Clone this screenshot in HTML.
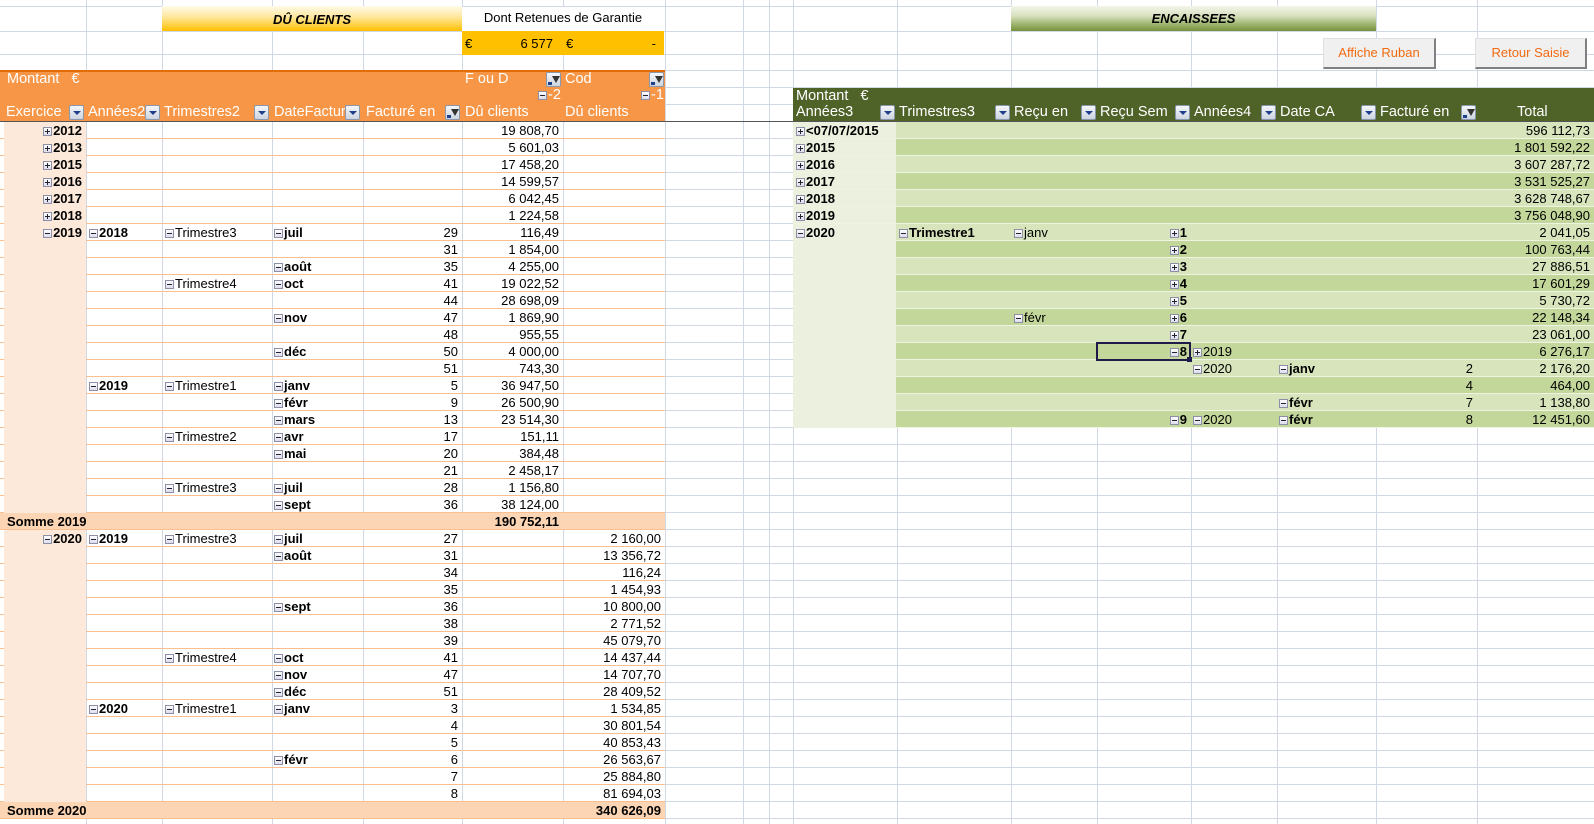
<!DOCTYPE html>
<html><head><meta charset="utf-8"><style>
*{margin:0;padding:0;box-sizing:border-box}
body{width:1594px;height:824px;position:relative;overflow:hidden;background:#fff;font-family:"Liberation Sans",Arial,sans-serif;font-size:13px;color:#000}
.v{position:absolute;top:0;height:824px;width:1px;background:#D0D7E5}
.h{position:absolute;left:0;width:1594px;height:1px;background:#D0D7E5}
.grid{position:absolute;left:0;top:122px;width:1594px;height:702px;background:repeating-linear-gradient(to bottom,transparent 0 16px,#D0D7E5 16px 17px)}
.L{position:absolute;left:0;width:665px;height:17px;border-bottom:1px solid #FABF8F}
.L .b0{position:absolute;left:4px;top:0;width:82px;height:17px;background:#FDE9D9}
.R{position:absolute;left:793px;width:801px;height:17px;border-bottom:1px solid #EEF3E2}
.c{position:absolute;top:0;height:16px;line-height:17px;white-space:nowrap;overflow:hidden}
.rt{text-align:right;padding-right:4px}
.bd{font-weight:bold}
.a0{left:0;width:86px}.a1{left:86px;width:76px;padding-left:3px}.a2{left:162px;width:110px;padding-left:3px}.a3{left:272px;width:91px;padding-left:2px}.a4{left:363px;width:99px}.a5{left:462px;width:101px}.a6{left:563px;width:102px}
.b_0{left:0;width:103px;padding-left:3px}.b_1{left:103px;width:115px;padding-left:3px}.b_2{left:218px;width:86px;padding-left:3px}.b_3{left:304px;width:94px}.b_4{left:398px;width:86px;padding-left:2px}.b_5{left:484px;width:99px;padding-left:2px}.b_6{left:583px;width:101px}.b_7{left:684px;width:117px}
.p,.m{display:inline-block;width:9px;height:9px;border:1px solid #8d8fa6;background:linear-gradient(#fff,#dde);position:relative;margin-right:1px;vertical-align:-1px}
.p::before,.m::before{content:"";position:absolute;left:1px;top:3px;width:5px;height:1px;background:#223}
.p::after{content:"";position:absolute;left:3px;top:1px;width:1px;height:5px;background:#223}
.hd{position:absolute;color:#fff;font-size:14.5px;line-height:17px;white-space:nowrap}
.dd{position:absolute;width:15px;height:15px;border:1px solid #8a98ad;border-radius:2px;background:linear-gradient(#f4f6f9,#cdd5e0)}
.dd::after{content:"";position:absolute;left:3px;top:5px;border-left:4px solid transparent;border-right:4px solid transparent;border-top:4px solid #1e3f8a}
.ff::after{content:"";position:absolute;left:5px;top:3px;width:0;height:0;border-left:4px solid transparent;border-right:4px solid transparent;border-top:7px solid #333}
.ff::before{content:"";position:absolute;left:1px;top:9px;width:4px;height:3px;background:#1e3f8a}
.btn{position:absolute;background:#f0f0f0;border:1px solid #e0e0e0;border-right:2px solid #808080;border-bottom:2px solid #808080;color:#F26A10;font-size:13px;text-align:center;line-height:27px}
</style></head><body>
<div class="grid"></div>
<div class="h" style="top:6px"></div><div class="h" style="top:31px"></div><div class="h" style="top:54px"></div><div class="h" style="top:70px"></div><div class="h" style="top:87px"></div><div class="h" style="top:104px"></div>
<div class="v" style="left:86px"></div><div class="v" style="left:162px"></div><div class="v" style="left:272px"></div><div class="v" style="left:363px"></div><div class="v" style="left:462px"></div><div class="v" style="left:563px"></div><div class="v" style="left:665px"></div><div class="v" style="left:743px"></div><div class="v" style="left:769px"></div><div class="v" style="left:793px"></div><div class="v" style="left:897px"></div><div class="v" style="left:1011px"></div><div class="v" style="left:1097px"></div><div class="v" style="left:1191px"></div><div class="v" style="left:1277px"></div><div class="v" style="left:1376px"></div><div class="v" style="left:1477px"></div>

<div style="position:absolute;left:162px;top:6px;width:300px;height:25px;background:linear-gradient(#fffbea,#ffe699 45%,#ffc000);text-align:center;font-weight:bold;font-style:italic;font-size:13px;line-height:28px">DÛ CLIENTS</div>
<div style="position:absolute;left:462px;top:7px;width:202px;height:24px;background:#fff;text-align:center;font-size:13px;line-height:22px">Dont Retenues de Garantie</div>
<div style="position:absolute;left:462px;top:31px;width:202px;height:24px;background:#FFC000;font-size:13px;line-height:26px">
<span style="position:absolute;left:3px">€</span><span style="position:absolute;right:111px">6 577</span><span style="position:absolute;left:104px">€</span><span style="position:absolute;right:8px">-</span></div>

<div style="position:absolute;left:1011px;top:6px;width:365px;height:25px;background:linear-gradient(#f3f5ea,#d6e0bd 40%,#9bb26a 75%,#76923C);text-align:center;font-weight:bold;font-style:italic;font-size:13px;line-height:26px">ENCAISSEES</div>
<div class="btn" style="left:1323px;top:38px;width:113px;height:31px">Affiche Ruban</div>
<div class="btn" style="left:1475px;top:38px;width:112px;height:31px">Retour Saisie</div>

<div style="position:absolute;left:0;top:70px;width:665px;height:52px;background:#F79646;border-top:2px solid #E26B0A"></div>
<div class="hd" style="left:7px;top:71px">Montant&nbsp;&nbsp; €</div>
<div class="hd" style="left:465px;top:71px">F ou D</div><div class="dd ff" style="left:546px;top:72px"></div>
<div class="hd" style="left:565px;top:71px">Cod</div><div class="dd ff" style="left:649px;top:72px"></div>
<div class="hd" style="left:538px;top:87px"><span class="m"></span>-2</div>
<div class="hd" style="left:641px;top:87px"><span class="m"></span>-1</div>
<div class="hd" style="left:6px;top:104px">Exercice</div><div class="dd" style="left:69px;top:105px"></div>
<div class="hd" style="left:88px;top:104px">Années2</div><div class="dd" style="left:145px;top:105px"></div>
<div class="hd" style="left:164px;top:104px">Trimestres2</div><div class="dd" style="left:254px;top:105px"></div>
<div class="hd" style="left:274px;top:104px;width:72px;overflow:hidden">DateFacture</div><div class="dd" style="left:345px;top:105px"></div>
<div class="hd" style="left:366px;top:104px">Facturé en</div><div class="dd ff" style="left:445px;top:105px"></div>
<div class="hd" style="left:465px;top:104px">Dû clients</div>
<div class="hd" style="left:565px;top:104px">Dû clients</div>

<div style="position:absolute;left:793px;top:88px;width:801px;height:34px;background:#4F6228"></div>
<div class="hd" style="left:796px;top:88px">Montant&nbsp;&nbsp; €</div>
<div class="hd" style="left:796px;top:104px">Années3</div><div class="dd" style="left:880px;top:105px"></div>
<div class="hd" style="left:899px;top:104px">Trimestres3</div><div class="dd" style="left:995px;top:105px"></div>
<div class="hd" style="left:1014px;top:104px">Reçu en</div><div class="dd" style="left:1081px;top:105px"></div>
<div class="hd" style="left:1100px;top:104px">Reçu Sem</div><div class="dd" style="left:1175px;top:105px"></div>
<div class="hd" style="left:1194px;top:104px">Années4</div><div class="dd" style="left:1261px;top:105px"></div>
<div class="hd" style="left:1280px;top:104px">Date CA</div><div class="dd" style="left:1361px;top:105px"></div>
<div class="hd" style="left:1380px;top:104px">Facturé en</div><div class="dd ff" style="left:1461px;top:105px"></div>
<div class="hd" style="left:1517px;top:104px">Total</div>
<div style="position:absolute;left:0;top:121px;width:1594px;height:1px;background:#555"></div>

<div class="L" style="top:122px"><div class="b0"></div><span class="c a0 rt bd"><span class="p"></span>2012</span><span class="c a5 rt">19 808,70</span></div>
<div class="L" style="top:139px"><div class="b0"></div><span class="c a0 rt bd"><span class="p"></span>2013</span><span class="c a5 rt">5 601,03</span></div>
<div class="L" style="top:156px"><div class="b0"></div><span class="c a0 rt bd"><span class="p"></span>2015</span><span class="c a5 rt">17 458,20</span></div>
<div class="L" style="top:173px"><div class="b0"></div><span class="c a0 rt bd"><span class="p"></span>2016</span><span class="c a5 rt">14 599,57</span></div>
<div class="L" style="top:190px"><div class="b0"></div><span class="c a0 rt bd"><span class="p"></span>2017</span><span class="c a5 rt">6 042,45</span></div>
<div class="L" style="top:207px"><div class="b0"></div><span class="c a0 rt bd"><span class="p"></span>2018</span><span class="c a5 rt">1 224,58</span></div>
<div class="L" style="top:224px"><div class="b0"></div><span class="c a0 rt bd"><span class="m"></span>2019</span><span class="c a1 bd"><span class="m"></span>2018</span><span class="c a2"><span class="m"></span>Trimestre3</span><span class="c a3 bd"><span class="m"></span>juil</span><span class="c a4 rt">29</span><span class="c a5 rt">116,49</span></div>
<div class="L" style="top:241px"><div class="b0"></div><span class="c a4 rt">31</span><span class="c a5 rt">1 854,00</span></div>
<div class="L" style="top:258px"><div class="b0"></div><span class="c a3 bd"><span class="m"></span>août</span><span class="c a4 rt">35</span><span class="c a5 rt">4 255,00</span></div>
<div class="L" style="top:275px"><div class="b0"></div><span class="c a2"><span class="m"></span>Trimestre4</span><span class="c a3 bd"><span class="m"></span>oct</span><span class="c a4 rt">41</span><span class="c a5 rt">19 022,52</span></div>
<div class="L" style="top:292px"><div class="b0"></div><span class="c a4 rt">44</span><span class="c a5 rt">28 698,09</span></div>
<div class="L" style="top:309px"><div class="b0"></div><span class="c a3 bd"><span class="m"></span>nov</span><span class="c a4 rt">47</span><span class="c a5 rt">1 869,90</span></div>
<div class="L" style="top:326px"><div class="b0"></div><span class="c a4 rt">48</span><span class="c a5 rt">955,55</span></div>
<div class="L" style="top:343px"><div class="b0"></div><span class="c a3 bd"><span class="m"></span>déc</span><span class="c a4 rt">50</span><span class="c a5 rt">4 000,00</span></div>
<div class="L" style="top:360px"><div class="b0"></div><span class="c a4 rt">51</span><span class="c a5 rt">743,30</span></div>
<div class="L" style="top:377px"><div class="b0"></div><span class="c a1 bd"><span class="m"></span>2019</span><span class="c a2"><span class="m"></span>Trimestre1</span><span class="c a3 bd"><span class="m"></span>janv</span><span class="c a4 rt">5</span><span class="c a5 rt">36 947,50</span></div>
<div class="L" style="top:394px"><div class="b0"></div><span class="c a3 bd"><span class="m"></span>févr</span><span class="c a4 rt">9</span><span class="c a5 rt">26 500,90</span></div>
<div class="L" style="top:411px"><div class="b0"></div><span class="c a3 bd"><span class="m"></span>mars</span><span class="c a4 rt">13</span><span class="c a5 rt">23 514,30</span></div>
<div class="L" style="top:428px"><div class="b0"></div><span class="c a2"><span class="m"></span>Trimestre2</span><span class="c a3 bd"><span class="m"></span>avr</span><span class="c a4 rt">17</span><span class="c a5 rt">151,11</span></div>
<div class="L" style="top:445px"><div class="b0"></div><span class="c a3 bd"><span class="m"></span>mai</span><span class="c a4 rt">20</span><span class="c a5 rt">384,48</span></div>
<div class="L" style="top:462px"><div class="b0"></div><span class="c a4 rt">21</span><span class="c a5 rt">2 458,17</span></div>
<div class="L" style="top:479px"><div class="b0"></div><span class="c a2"><span class="m"></span>Trimestre3</span><span class="c a3 bd"><span class="m"></span>juil</span><span class="c a4 rt">28</span><span class="c a5 rt">1 156,80</span></div>
<div class="L" style="top:496px"><div class="b0"></div><span class="c a3 bd"><span class="m"></span>sept</span><span class="c a4 rt">36</span><span class="c a5 rt">38 124,00</span></div>
<div class="L" style="top:513px;background:#FCD5B4"><span class="c bd" style="left:7px">Somme 2019</span><span class="c a5 rt bd">190 752,11</span></div>
<div class="L" style="top:530px"><div class="b0"></div><span class="c a0 rt bd"><span class="m"></span>2020</span><span class="c a1 bd"><span class="m"></span>2019</span><span class="c a2"><span class="m"></span>Trimestre3</span><span class="c a3 bd"><span class="m"></span>juil</span><span class="c a4 rt">27</span><span class="c a6 rt">2 160,00</span></div>
<div class="L" style="top:547px"><div class="b0"></div><span class="c a3 bd"><span class="m"></span>août</span><span class="c a4 rt">31</span><span class="c a6 rt">13 356,72</span></div>
<div class="L" style="top:564px"><div class="b0"></div><span class="c a4 rt">34</span><span class="c a6 rt">116,24</span></div>
<div class="L" style="top:581px"><div class="b0"></div><span class="c a4 rt">35</span><span class="c a6 rt">1 454,93</span></div>
<div class="L" style="top:598px"><div class="b0"></div><span class="c a3 bd"><span class="m"></span>sept</span><span class="c a4 rt">36</span><span class="c a6 rt">10 800,00</span></div>
<div class="L" style="top:615px"><div class="b0"></div><span class="c a4 rt">38</span><span class="c a6 rt">2 771,52</span></div>
<div class="L" style="top:632px"><div class="b0"></div><span class="c a4 rt">39</span><span class="c a6 rt">45 079,70</span></div>
<div class="L" style="top:649px"><div class="b0"></div><span class="c a2"><span class="m"></span>Trimestre4</span><span class="c a3 bd"><span class="m"></span>oct</span><span class="c a4 rt">41</span><span class="c a6 rt">14 437,44</span></div>
<div class="L" style="top:666px"><div class="b0"></div><span class="c a3 bd"><span class="m"></span>nov</span><span class="c a4 rt">47</span><span class="c a6 rt">14 707,70</span></div>
<div class="L" style="top:683px"><div class="b0"></div><span class="c a3 bd"><span class="m"></span>déc</span><span class="c a4 rt">51</span><span class="c a6 rt">28 409,52</span></div>
<div class="L" style="top:700px"><div class="b0"></div><span class="c a1 bd"><span class="m"></span>2020</span><span class="c a2"><span class="m"></span>Trimestre1</span><span class="c a3 bd"><span class="m"></span>janv</span><span class="c a4 rt">3</span><span class="c a6 rt">1 534,85</span></div>
<div class="L" style="top:717px"><div class="b0"></div><span class="c a4 rt">4</span><span class="c a6 rt">30 801,54</span></div>
<div class="L" style="top:734px"><div class="b0"></div><span class="c a4 rt">5</span><span class="c a6 rt">40 853,43</span></div>
<div class="L" style="top:751px"><div class="b0"></div><span class="c a3 bd"><span class="m"></span>févr</span><span class="c a4 rt">6</span><span class="c a6 rt">26 563,67</span></div>
<div class="L" style="top:768px"><div class="b0"></div><span class="c a4 rt">7</span><span class="c a6 rt">25 884,80</span></div>
<div class="L" style="top:785px"><div class="b0"></div><span class="c a4 rt">8</span><span class="c a6 rt">81 694,03</span></div>
<div class="L" style="top:802px;background:#FCD5B4"><span class="c bd" style="left:7px">Somme 2020</span><span class="c a6 rt bd">340 626,09</span></div>

<div class="R" style="top:122px;background:#D8E4BC"><span class="c b_0 bd" style="background:#EBF1DE"><span class="p"></span>&lt;07/07/2015</span><span class="c b_7 rt">596 112,73</span></div>
<div class="R" style="top:139px;background:#C4D79B"><span class="c b_0 bd" style="background:#EBF1DE"><span class="p"></span>2015</span><span class="c b_7 rt">1 801 592,22</span></div>
<div class="R" style="top:156px;background:#D8E4BC"><span class="c b_0 bd" style="background:#EBF1DE"><span class="p"></span>2016</span><span class="c b_7 rt">3 607 287,72</span></div>
<div class="R" style="top:173px;background:#C4D79B"><span class="c b_0 bd" style="background:#EBF1DE"><span class="p"></span>2017</span><span class="c b_7 rt">3 531 525,27</span></div>
<div class="R" style="top:190px;background:#D8E4BC"><span class="c b_0 bd" style="background:#EBF1DE"><span class="p"></span>2018</span><span class="c b_7 rt">3 628 748,67</span></div>
<div class="R" style="top:207px;background:#C4D79B"><span class="c b_0 bd" style="background:#EBF1DE"><span class="p"></span>2019</span><span class="c b_7 rt">3 756 048,90</span></div>
<div class="R" style="top:224px;background:#D8E4BC"><span class="c b_1 bd"><span class="m"></span>Trimestre1</span><span class="c b_2"><span class="m"></span>janv</span><span class="c b_3 rt bd"><span class="p"></span>1</span><span class="c b_7 rt">2 041,05</span></div>
<div class="R" style="top:241px;background:#C4D79B"><span class="c b_3 rt bd"><span class="p"></span>2</span><span class="c b_7 rt">100 763,44</span></div>
<div class="R" style="top:258px;background:#D8E4BC"><span class="c b_3 rt bd"><span class="p"></span>3</span><span class="c b_7 rt">27 886,51</span></div>
<div class="R" style="top:275px;background:#C4D79B"><span class="c b_3 rt bd"><span class="p"></span>4</span><span class="c b_7 rt">17 601,29</span></div>
<div class="R" style="top:292px;background:#D8E4BC"><span class="c b_3 rt bd"><span class="p"></span>5</span><span class="c b_7 rt">5 730,72</span></div>
<div class="R" style="top:309px;background:#C4D79B"><span class="c b_2"><span class="m"></span>févr</span><span class="c b_3 rt bd"><span class="p"></span>6</span><span class="c b_7 rt">22 148,34</span></div>
<div class="R" style="top:326px;background:#D8E4BC"><span class="c b_3 rt bd"><span class="p"></span>7</span><span class="c b_7 rt">23 061,00</span></div>
<div class="R" style="top:343px;background:#C4D79B"><span class="c b_3 rt bd"><span class="m"></span>8</span><span class="c b_4"><span class="p"></span>2019</span><span class="c b_7 rt">6 276,17</span></div>
<div class="R" style="top:360px;background:#D8E4BC"><span class="c b_4"><span class="m"></span>2020</span><span class="c b_5 bd"><span class="m"></span>janv</span><span class="c b_6 rt">2</span><span class="c b_7 rt">2 176,20</span></div>
<div class="R" style="top:377px;background:#C4D79B"><span class="c b_6 rt">4</span><span class="c b_7 rt">464,00</span></div>
<div class="R" style="top:394px;background:#D8E4BC"><span class="c b_5 bd"><span class="m"></span>févr</span><span class="c b_6 rt">7</span><span class="c b_7 rt">1 138,80</span></div>
<div class="R" style="top:411px;background:#C4D79B"><span class="c b_3 rt bd"><span class="m"></span>9</span><span class="c b_4"><span class="m"></span>2020</span><span class="c b_5 bd"><span class="m"></span>févr</span><span class="c b_6 rt">8</span><span class="c b_7 rt">12 451,60</span></div>
<div style="position:absolute;left:793px;top:224px;width:103px;height:204px;background:#EBF1DE"><span class="c bd" style="left:3px"><span class="m"></span>2020</span></div>
<div style="position:absolute;left:1096px;top:342px;width:95px;height:19px;border:2px solid #1f1a4a"></div>
<div style="position:absolute;left:1187px;top:357px;width:5px;height:5px;background:#1f1a4a"></div>
</body></html>
